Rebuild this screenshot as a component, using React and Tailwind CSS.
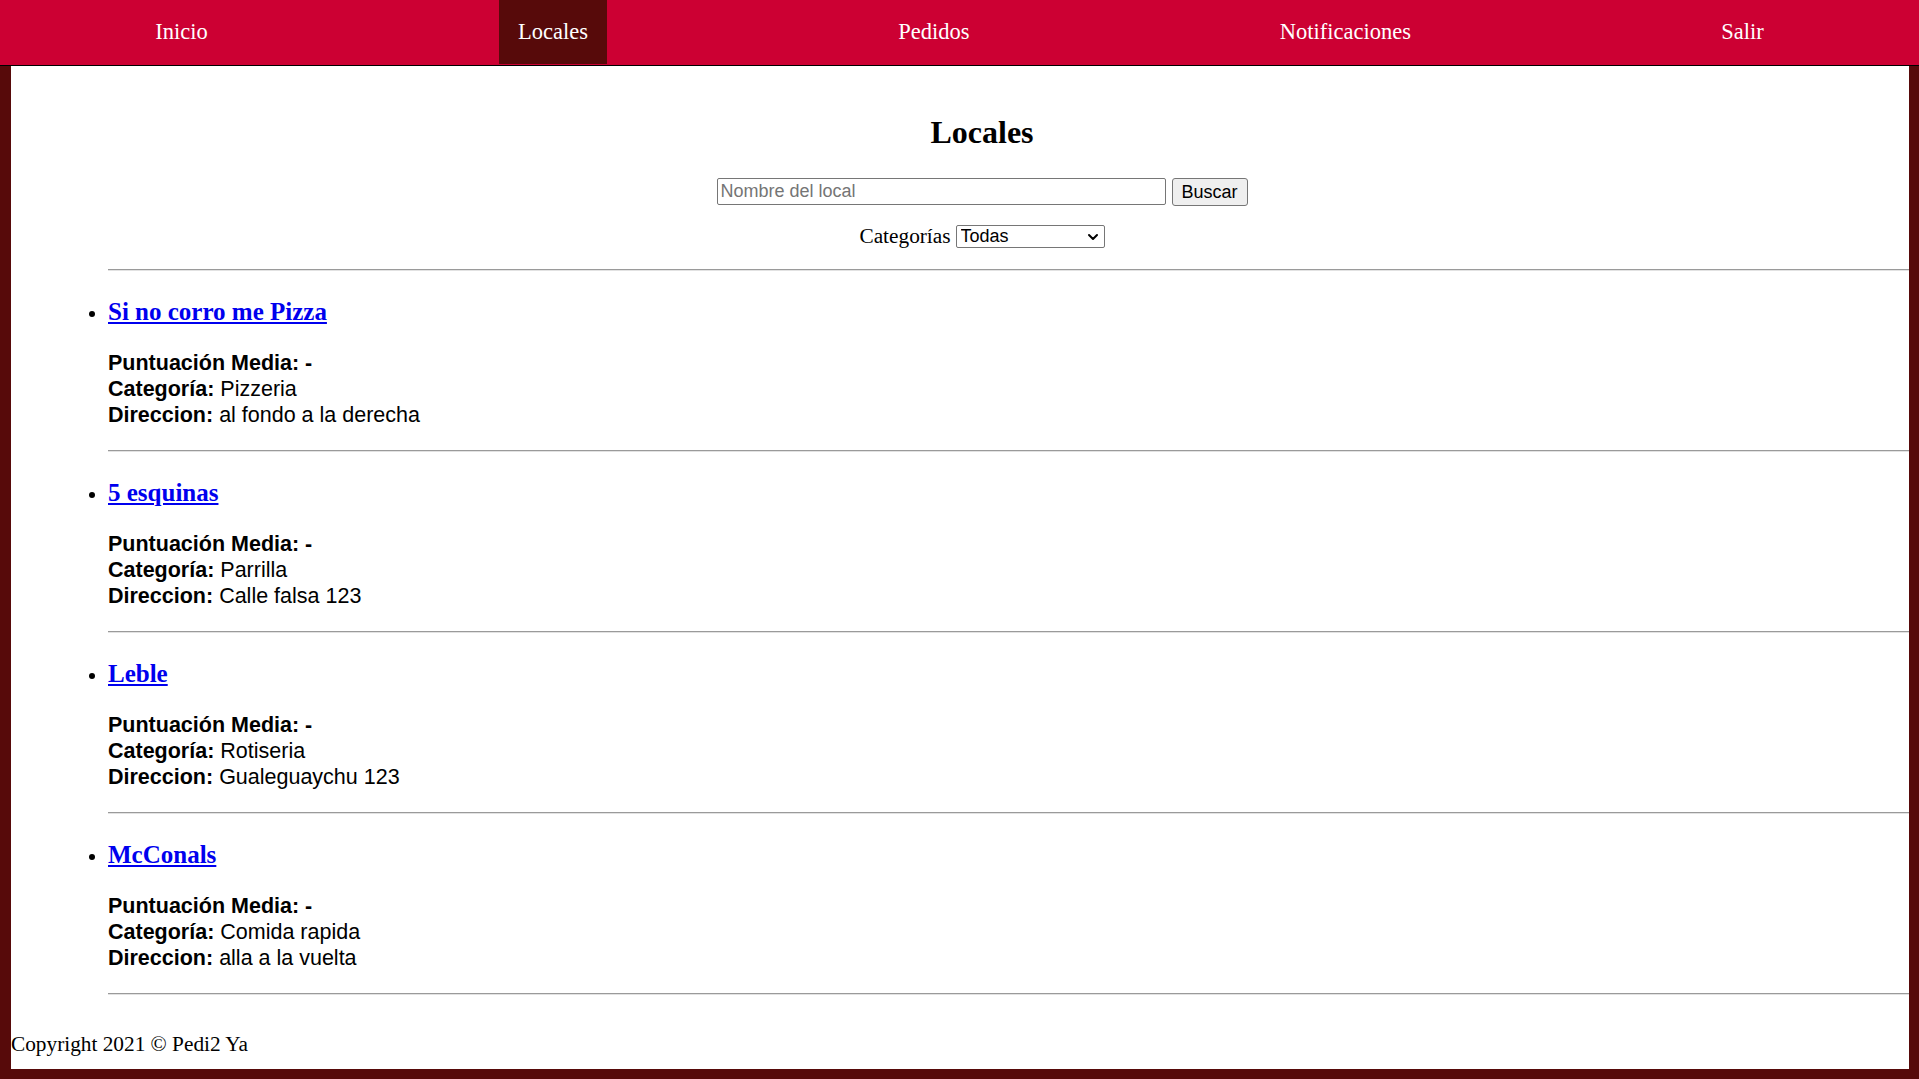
import React from 'react';

const serif = "font-['Liberation_Serif','Times_New_Roman',serif]";
const sans = "font-['Liberation_Sans',Arial,sans-serif]";

const navItems = [
  { label: 'Inicio' },
  { label: 'Locales', active: true },
  { label: 'Pedidos' },
  { label: 'Notificaciones' },
  { label: 'Salir' },
];

const locales = [
  { nombre: 'Si no corro me Pizza', categoria: 'Pizzeria', direccion: 'al fondo a la derecha' },
  { nombre: '5 esquinas', categoria: 'Parrilla', direccion: 'Calle falsa 123' },
  { nombre: 'Leble', categoria: 'Rotiseria', direccion: 'Gualeguaychu 123' },
  { nombre: 'McConals', categoria: 'Comida rapida', direccion: 'alla a la vuelta' },
];

const Divider = ({ className = '' }) => (
  <hr className={`h-0 border-0 border-t border-b border-t-[#9a9a9a] border-b-[#e2e2e2] ${className}`} />
);

const App = () => {
  return (
    <div className="min-h-screen bg-[#570a0a] pb-[10px]">
      {/* Navbar */}
      <nav className="h-[66px] bg-[#cc0033] border-b border-black flex justify-around items-start">
        {navItems.map((item) => (
          <a
            key={item.label}
            href="#"
            className={`h-[64px] px-[19px] flex items-center text-white text-[22.5px] leading-[26px] ${serif} ${
              item.active ? 'bg-[#570a0a]' : ''
            }`}
          >
            {item.label}
          </a>
        ))}
      </nav>

      {/* Main */}
      <main className={`bg-white ml-[11px] mr-[10px] pb-[13px] text-black ${serif} text-[21.3px]`}>
        <div className="pl-[44px] pt-[48px]">
          <h1 className="text-center text-[32px] leading-[36px] font-bold">Locales</h1>

          <form className="mt-[28px] flex justify-center items-start gap-[6px]" onSubmit={(e) => e.preventDefault()}>
            <input
              type="text"
              placeholder="Nombre del local"
              className={`block w-[449px] h-[27px] border border-[#767676] rounded-[2px] px-[3px] text-[18px] ${sans} placeholder:text-[#757575] outline-none`}
            />
            <button
              type="submit"
              className={`block w-[76px] h-[28px] bg-[#efefef] border border-[#767676] rounded-[3px] text-[18px] leading-none ${sans} text-black`}
            >
              Buscar
            </button>
          </form>

          <div className="mt-[18px] h-[24px] flex justify-center items-center gap-[5px]">
            <label className="leading-[24px]">Categorías</label>
            <div className="relative w-[149px] h-[23px]">
              <select
                className={`block appearance-none w-full h-[23px] border border-[#767676] rounded-[2px] pl-[4px] py-0 text-[18px] leading-[21px] ${sans} bg-white text-black outline-none`}
                defaultValue="todas"
              >
                <option value="todas">Todas</option>
                <option value="pizzeria">Pizzeria</option>
                <option value="parrilla">Parrilla</option>
                <option value="rotiseria">Rotiseria</option>
                <option value="rapida">Comida rapida</option>
              </select>
              <svg
                className="pointer-events-none absolute right-[6px] top-[8px]"
                width="12"
                height="8"
                viewBox="0 0 12 8"
                fill="none"
              >
                <path d="M2 2 L6 6 L10 2" stroke="#000" strokeWidth="2" strokeLinecap="round" strokeLinejoin="round" />
              </svg>
            </div>
          </div>
        </div>

        <div className="pl-[97px]">
          <Divider className="mt-[21px]" />
          <ul className="list-disc">
            {locales.map((l) => (
              <li key={l.nombre} className="text-[21.3px]">
                <h3 className="mt-[26px] text-[25px] leading-[29px] font-bold">
                  <a href="#" className="text-[#0000ee] underline">
                    {l.nombre}
                  </a>
                </h3>
                <p className={`mt-[24px] ${sans} text-[21.5px] leading-[26px]`}>
                  <b>Puntuación Media: -</b>
                  <br />
                  <b>Categoría:</b> {l.categoria}
                  <br />
                  <b>Direccion:</b> {l.direccion}
                </p>
                <Divider className="mt-[22px]" />
              </li>
            ))}
          </ul>
        </div>

        <footer className="mt-[37px] leading-[24px]">Copyright 2021 © Pedi2 Ya</footer>
      </main>
    </div>
  );
};

export default App;
